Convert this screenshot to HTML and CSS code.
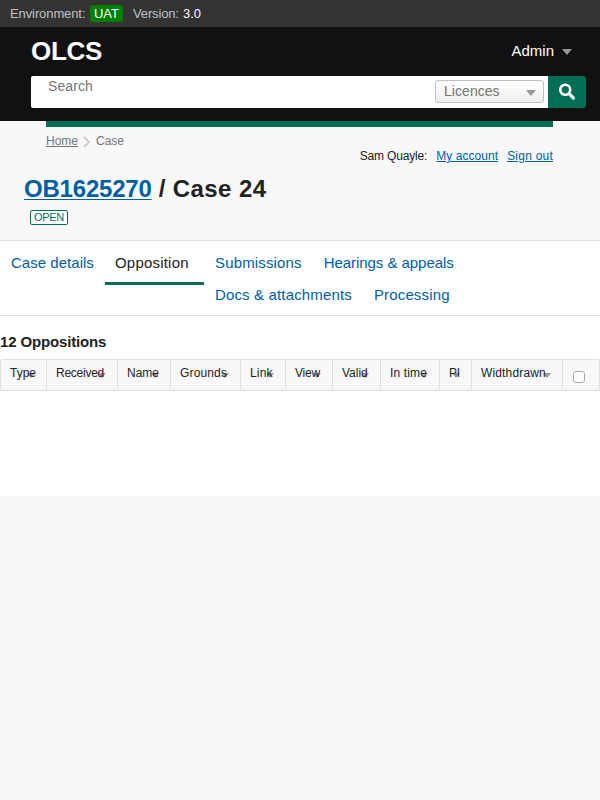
FILE: index.html
```html
<!DOCTYPE html>
<html lang="en">
<head>
<meta charset="utf-8">
<title>OLCS - Case 24</title>
<link rel="stylesheet" href="styles.css">
</head>
<body>
<div class="env"><span class="env-label">Environment:</span><span class="env-tag">UAT</span><span class="env-version">Version:</span><span class="env-number">3.0</span></div>
<header class="header">
  <div class="header-top"><a class="logo">OLCS</a><a class="admin">Admin<i class="arrow"></i></a></div>
  <form class="search">
    <div class="search-field"><span class="placeholder">Search</span><div class="select"><span>Licences</span><i class="arrow"></i></div></div>
    <button class="search-button" type="button" aria-label="Search"><svg width="18" height="18" viewBox="0 0 18 18" fill="none" stroke="#fff"><circle cx="7.2" cy="6.8" r="5" stroke-width="2.6"/><path d="M11 10.6L15.4 15" stroke-width="3.2" stroke-linecap="round"/></svg></button>
  </form>
</header>
<section class="intro">
  <div class="bar"></div>
  <div class="meta">
    <nav class="crumbs"><a class="crumb-home">Home</a><svg width="8" height="12" viewBox="0 0 8 12" fill="none" stroke="#bfc1c3" stroke-width="1.5"><path d="M1 1L6 6L1 11"/></svg><span>Case</span></nav>
    <div class="user"><span class="user-name">Sam Quayle:</span><a class="account">My account</a><a class="signout">Sign out</a></div>
  </div>
  <h1><a>OB1625270</a> / Case 24</h1>
  <span class="status">OPEN</span>
</section>
<main>
  <nav class="tabs">
    <a class="tab-case">Case details</a>
    <a class="tab-active">Opposition</a>
    <div class="tab-group">
      <div class="tab-row"><a>Submissions</a><a class="tab-hearings">Hearings &amp; appeals</a></div>
      <div class="tab-row"><a>Docs &amp; attachments</a><a>Processing</a></div>
    </div>
  </nav>
  <h2>12 Oppositions</h2>
  <table>
    <colgroup><col class="c-type"><col class="c-received"><col class="c-name"><col class="c-grounds"><col class="c-link"><col class="c-view"><col class="c-valid"><col class="c-time"><col class="c-pi"><col class="c-withdrawn"><col class="c-check"></colgroup>
    <thead><tr>
      <th><a>Type<i class="arrow"></i></a></th>
      <th><a class="tight">Received<i class="arrow"></i></a></th>
      <th><a>Name<i class="arrow"></i></a></th>
      <th><a class="wide">Grounds<i class="arrow"></i></a></th>
      <th><a class="wide">Link<i class="arrow"></i></a></th>
      <th><a class="tight">View<i class="arrow"></i></a></th>
      <th><a>Valid<i class="arrow"></i></a></th>
      <th><a class="wide">In time<i class="arrow"></i></a></th>
      <th><a class="tight">PI<i class="arrow"></i></a></th>
      <th><a class="wide">Widthdrawn<i class="arrow"></i></a></th>
      <th class="check"><span class="checkbox"></span></th>
    </tr></thead>
  </table>
</main>
</body>
</html>
```
FILE: styles.css
```css
* { box-sizing: border-box; }
body {
  margin: 0;
  background: #f8f8f8;
  color: #222;
  font-family: "Liberation Sans", Arial, sans-serif;
  font-size: 15px;
}
.arrow {
  display: block;
  width: 0;
  height: 0;
  border: 5px solid transparent;
  border-top: 6px solid #999;
  border-bottom: 0;
}
.env {
  display: flex;
  align-items: center;
  height: 27px;
  padding-left: 10px;
  background: #333;
  color: #bfc1c3;
  font-size: 13px;
}
.env-label { width: 80px; letter-spacing: -0.1px; }
.env-tag {
  width: 33px;
  height: 17px;
  border-radius: 2px;
  background: #008000;
  color: #fff;
  line-height: 17px;
  text-align: center;
}
.env-version { margin-left: 10px; width: 50px; letter-spacing: -0.15px; }
.env-number { color: #fff; }
.header { height: 94px; background: #111; color: #fff; }
.header-top {
  display: flex;
  justify-content: space-between;
  align-items: center;
  height: 49px;
  padding: 0 28px 0 31px;
}
.logo { font-size: 26px; font-weight: bold; letter-spacing: -0.3px; }
.admin { display: flex; align-items: center; gap: 8px; margin-top: -2px; }
.admin .arrow { margin-top: 3px; }
.search { display: flex; height: 32px; padding: 0 14px 0 31px; }
.search-field {
  display: flex;
  flex: 1;
  justify-content: space-between;
  padding: 4px 4px 0 17px;
  border-radius: 2px 0 0 2px;
  background: #fff;
  color: #757575;
}
.placeholder { font-size: 14px; line-height: 12px; letter-spacing: 0.1px; }
.select {
  display: flex;
  justify-content: space-between;
  align-items: center;
  width: 109px;
  height: 23px;
  padding: 0 7px 0 8px;
  border: 1px solid #bfc1c3;
  border-radius: 3px;
  background: linear-gradient(#fff, #eee);
  font-size: 14px;
  letter-spacing: 0.05px;
}
.select span { margin-top: -1px; }
.select .arrow { margin-top: 3px; }
.search-button {
  display: flex;
  align-items: center;
  justify-content: center;
  width: 38px;
  padding: 0;
  border: 0;
  border-radius: 0 3px 3px 0;
  background: #006f56;
}
.intro { height: 119px; padding: 0 47px 0 46px; }
.bar { height: 6px; background: #006f56; }
.meta { display: flex; justify-content: space-between; height: 48px; font-size: 12px; line-height: 14px; }
.crumbs { display: flex; padding-top: 7px; color: #6f777b; }
.crumbs svg { margin: 2px 5px 0; }
.crumb-home { text-decoration: underline; }
.user { display: flex; padding-top: 22px; }
.user-name { letter-spacing: -0.17px; }
.user a { color: #005ea5; text-decoration: underline; text-underline-offset: 1px; }
.user .account { margin-left: 9px; letter-spacing: 0.05px; }
.user .signout { margin-left: 9px; letter-spacing: 0.23px; }
h1 { margin: 0 0 0 -22px; font-size: 24px; line-height: 28px; letter-spacing: 0.4px; white-space: nowrap; }
h1 a { color: #005ea5; letter-spacing: -0.2px; text-decoration: underline; text-decoration-thickness: 1px; text-underline-offset: 2px; }
.status {
  display: block;
  width: 38px;
  height: 15px;
  margin: 7px 0 0 -16px;
  border: 1px solid #006f56;
  border-radius: 2px;
  color: #006f56;
  background: #fff;
  font-size: 11px;
  line-height: 13px;
  letter-spacing: -0.3px;
  text-align: center;
}
main { height: 256px; background: #fff; }
.tabs {
  display: flex;
  align-items: flex-start;
  height: 76px;
  border-top: 1px solid #dee0e2;
  border-bottom: 1px solid #dee0e2;
  color: #005ea5;
  line-height: 18px;
  white-space: nowrap;
}
.tab-case { width: 105px; padding: 13px 0 0 11px; letter-spacing: 0.03px; }
.tab-active {
  width: 99px;
  height: 44px;
  padding: 13px 0 0 10px;
  border-bottom: 3px solid #006f56;
  color: #222;
  letter-spacing: 0.2px;
}
.tab-group { display: flex; flex-direction: column; gap: 14px; padding: 13px 0 0 11px; letter-spacing: 0.15px; }
.tab-row { display: flex; gap: 22px; }
.tab-hearings { letter-spacing: -0.05px; }
h2 { margin: 17px 0 8px; font-size: 15px; line-height: 18px; letter-spacing: -0.15px; }
table { width: 600px; border-collapse: separate; border-spacing: 0; table-layout: fixed; }
th {
  height: 32px;
  padding: 6px 11px 0 9px;
  border: solid #dee0e2;
  border-width: 1px 1px 1px 0;
  background: #f8f8f8;
  font-size: 12px;
  font-weight: normal;
  line-height: 14px;
  text-align: left;
  vertical-align: top;
}
th:first-child { border-left-width: 1px; border-top-left-radius: 2px; }
th:last-child { border-top-right-radius: 2px; }
th a { position: relative; z-index: 0; display: block; white-space: nowrap; }
th .tight { letter-spacing: -0.25px; }
th .wide { letter-spacing: 0.15px; }
th .arrow { position: absolute; z-index: -1; right: 0; top: 7px; border-width: 5px 4px 0; }
.c-type { width: 47px; }
.c-received { width: 71px; }
.c-name { width: 53px; }
.c-grounds { width: 70px; }
.c-link { width: 45px; }
.c-view { width: 47px; }
.c-valid { width: 48px; }
.c-time { width: 59px; }
.c-pi { width: 32px; }
.c-withdrawn { width: 91px; }
.c-check { width: 37px; }
th.check { padding: 11px 0 0 10px; }
.checkbox { display: block; width: 12px; height: 12px; border: 1px solid #aaa; border-radius: 3px; background: #fff; }
```
